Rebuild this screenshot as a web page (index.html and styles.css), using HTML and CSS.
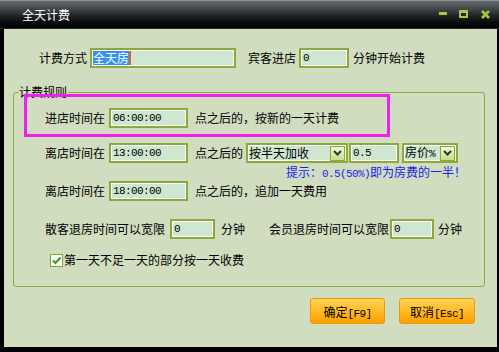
FILE: index.html
```html
<!DOCTYPE html>
<html>
  <head>
    <meta charset="utf-8">
    <title>全天计费</title>
    <link rel="stylesheet" href="styles.css">
  </head>

  <body>
    <div class="window">
      <div class="titlebar">
        <span class="title">全天计费</span>
        <svg class="controls" width="52" height="29" viewBox="0 0 52 29">
          <rect x="0" y="12" width="8" height="3" fill="#a2cc3e" />
          <path d="M20 10h9v3h-9z M20 13h2v5h-2z M27 13h2v5h-2z M22 16h5v2h-5z" fill="#a2cc3e" />
          <path d="M43 11l7 7 M50 11l-7 7" stroke="#a2cc3e" stroke-width="2.6" fill="none" />
        </svg>
      </div>

      <div class="content">
        <div class="row row-top">
          <span class="lbl">计费方式</span>
          <div class="field field-mode">
            <span class="selected">全天房</span><span class="caret"></span>
          </div>
          <span class="lbl lbl-guest">宾客进店</span>
          <div class="field field-small">0</div>
          <span class="lbl lbl-after">分钟开始计费</span>
        </div>

        <div class="group">
          <span class="legend">计费规则</span>

          <div class="row highlight">
            <span class="lbl">进店时间在</span>
            <div class="field field-time">06:00:00</div>
            <span class="lbl lbl-point">点之后的，按新的一天计费</span>
          </div>

          <div class="row row-rule row-leave">
            <span class="lbl">离店时间在</span>
            <div class="field field-time">13:00:00</div>
            <span class="lbl lbl-point">点之后的</span>
            <div class="field select select-mode">
              <span class="select-text">按半天加收</span>
              <span class="drop">
                <svg width="9" height="6" viewBox="0 0 9 6"><path d="M1 1l3.5 3.5L8 1" stroke="#333" stroke-width="2" fill="none" /></svg>
              </span>
            </div>
            <div class="field field-rate">0.5</div>
            <div class="field select select-unit">
              <span class="select-text">房价<span class="pct">%</span></span>
              <span class="drop">
                <svg width="9" height="6" viewBox="0 0 9 6"><path d="M1 1l3.5 3.5L8 1" stroke="#333" stroke-width="2" fill="none" /></svg>
              </span>
            </div>
          </div>

          <div class="hint">提示：<span class="mono">0.5(50%)</span>即为房费的一半！</div>

          <div class="row row-rule">
            <span class="lbl">离店时间在</span>
            <div class="field field-time">18:00:00</div>
            <span class="lbl lbl-point">点之后的，追加一天费用</span>
          </div>

          <div class="row row-rule row-grace">
            <span class="lbl">散客退房时间可以宽限</span>
            <div class="field field-grace">0</div>
            <span class="lbl lbl-min">分钟</span>
            <span class="lbl lbl-member">会员退房时间可以宽限</span>
            <div class="field field-grace2">0</div>
            <span class="lbl lbl-min2">分钟</span>
          </div>

          <div class="row row-check">
            <span class="check">
              <svg width="11" height="11" viewBox="0 0 11 11"><path d="M2 5.5l2.5 2.5L9.5 2.5" stroke="#3c9c2c" stroke-width="2.2" fill="none" /></svg>
            </span>
            <span class="lbl">第一天不足一天的部分按一天收费</span>
          </div>
        </div>

        <div class="buttons">
          <button class="btn btn-ok">确定<span class="mono">[F9]</span></button>
          <button class="btn btn-cancel">取消<span class="mono">[Esc]</span></button>
        </div>
      </div>
    </div>
  </body>
</html>
```

FILE: styles.css
```css
body {
  margin: 0;
  background: #000;
  font-family: "Noto Sans CJK SC", "Noto Sans", sans-serif;
  font-size: 12px;
  color: #000;
}
.window {
  width: 499px;
  height: 352px;
  display: flex;
  flex-direction: column;
  background: #000;
}
.titlebar {
  height: 29px;
  flex: none;
  display: flex;
  align-items: center;
  justify-content: space-between;
  box-sizing: border-box;
  border-top: 1px solid #8f9397;
  border-bottom: 1px solid #1d2529;
  background: linear-gradient(#62676c 0, #50555a 5px, #24282b 14px, #0a0b0c 21px, #000 28px);
}
.title {
  color: #fff;
  padding-left: 22px;
  line-height: 14px;
}
.controls {
  margin-right: 8px;
  margin-top: -1px;
}
.content {
  flex: 1;
  margin: 0 2px 5px 4px;
  background: #d1ddbf;
  padding-top: 19px;
}
.row {
  display: flex;
  align-items: center;
  height: 20px;
}
.lbl {
  line-height: 14px;
  white-space: nowrap;
}
.mono {
  font-family: "Liberation Mono", "DejaVu Sans Mono", monospace;
  font-size: 11px;
  letter-spacing: -0.6px;
}

/* text boxes */
.field {
  box-sizing: border-box;
  height: 20px;
  border: 2px solid #8aab3c;
  box-shadow: inset 0 0 0 1px #fff;
  background: #cfe7d0;
  display: flex;
  align-items: center;
  padding-left: 2px;
  font-family: "Liberation Mono", "DejaVu Sans Mono", monospace;
  font-size: 11px;
  letter-spacing: -0.6px;
  white-space: nowrap;
}

.row-top {
  padding-left: 35px;
}
.field-mode {
  width: 146px;
  margin-left: 3px;
  padding-left: 1px;
}
.selected {
  background: #3592f0;
  color: #fff;
  font-family: "Noto Sans CJK SC", sans-serif;
  font-size: 12px;
  letter-spacing: 0;
  line-height: 14px;
}
.caret {
  width: 2px;
  height: 14px;
  background: #e0641c;
}
.lbl-guest {
  margin-left: 12px;
}
.field-small {
  width: 50px;
  margin-left: 3px;
}
.lbl-after {
  margin-left: 4px;
}

/* rule group */
.group {
  position: relative;
  box-sizing: border-box;
  width: 472px;
  margin: 24px 0 0 9px;
  border: 1px solid #8aab3c;
  border-radius: 3px;
  padding-bottom: 19px;
}
.legend {
  position: absolute;
  left: 5px;
  top: -8px;
  line-height: 14px;
  background: #d1ddbf;
  padding: 0 1px 0 0;
}
.highlight {
  position: relative;
  box-sizing: border-box;
  width: 366px;
  height: 43px;
  margin: 1px 0 0 10px;
  border: 3px solid #f020ee;
  padding: 11px 0 6px 18px;
}
.field-time {
  width: 79px;
  margin-left: 4px;
}
.lbl-point {
  margin-left: 7px;
}
.row-rule {
  padding-left: 31px;
}
.row-leave {
  margin-top: 6px;
}
.select {
  justify-content: space-between;
  padding-left: 1px;
  padding-right: 1px;
  font-family: "Noto Sans CJK SC", sans-serif;
  font-size: 12px;
  letter-spacing: 0;
}
.select-text {
  line-height: 14px;
}
.pct {
  font-family: "Liberation Mono", monospace;
  font-size: 11px;
  letter-spacing: -0.6px;
}
.select-mode {
  width: 102px;
  margin-left: 3px;
}
.select-unit {
  width: 56px;
  margin-left: 3px;
}
.drop {
  box-sizing: border-box;
  flex: none;
  width: 15px;
  height: 15px;
  border: 1px solid #8aab3c;
  background: linear-gradient(#f2f8d8, #c4de86);
  display: flex;
  align-items: center;
  justify-content: center;
}
.field-rate {
  width: 50px;
  margin-left: 1px;
}
.hint {
  color: #1c1cf4;
  line-height: 14px;
  margin-top: 2px;
  padding-left: 272px;
  white-space: nowrap;
}
.row-grace {
  margin-top: 18px;
}
.field-grace {
  width: 45px;
  margin-left: 5px;
}
.lbl-min {
  margin-left: 6px;
}
.lbl-member {
  margin-left: 24px;
}
.field-grace2 {
  width: 44px;
  margin-left: 1px;
}
.lbl-min2 {
  margin-left: 4px;
}
.row-check {
  height: 14px;
  margin-top: 14px;
  padding-left: 36px;
}
.check {
  box-sizing: border-box;
  width: 13px;
  height: 13px;
  border: 1px solid #7ca83a;
  background: #fbfdf6;
  display: flex;
  align-items: center;
  justify-content: center;
  margin-right: 1px;
}

/* buttons */
.buttons {
  display: flex;
  justify-content: flex-end;
  gap: 14px;
  margin: 11px 22px 0 0;
}
.btn {
  box-sizing: border-box;
  height: 26px;
  width: 75px;
  border: 1px solid #eb9a10;
  border-radius: 3px;
  background: linear-gradient(#ffd45a 0, #ffbd2a 45%, #ff9e00 100%);
  font-family: "Noto Sans CJK SC", sans-serif;
  font-size: 12px;
  color: #000;
  padding: 0;
}
.btn-cancel {
  width: 76px;
}
```
